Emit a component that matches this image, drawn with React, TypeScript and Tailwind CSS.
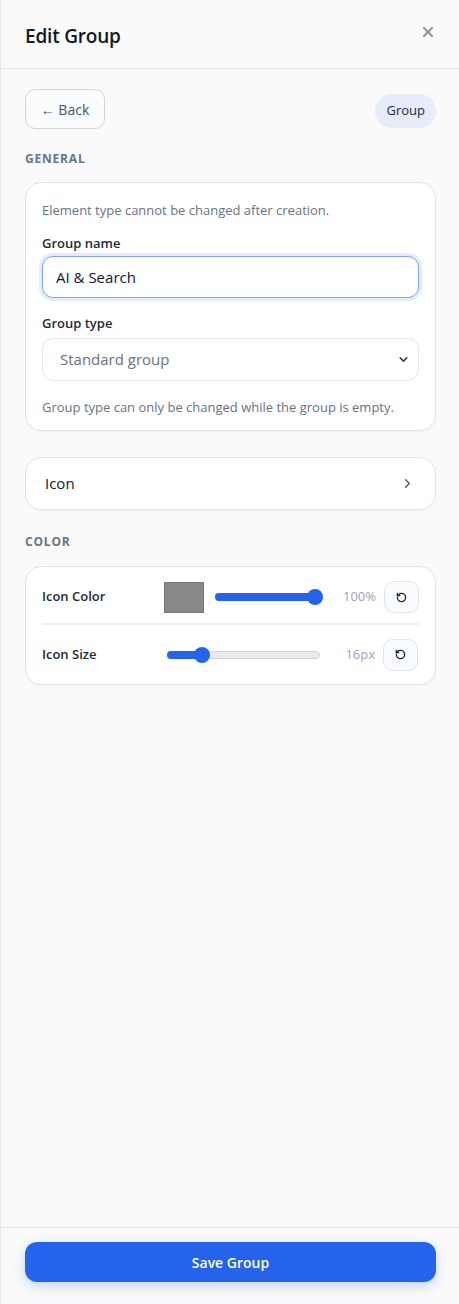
import { ChevronRight, ChevronDown, X, RotateCcw } from 'lucide-react';

function ResetButton() {
  return (
    <button className="flex h-8 w-[35px] shrink-0 items-center justify-center rounded-[10px] border border-[#dfe3ea] bg-[#fafbfc] text-[#1f2937]">
      <RotateCcw size={11} strokeWidth={3} />
    </button>
  );
}

function Slider({ pct, width }: { pct: number; width: number }) {
  return (
    <div className="relative h-4" style={{ width }}>
      <div className="absolute left-0 right-0 top-1/2 h-[8px] -translate-y-1/2 rounded-full border border-[#cfd3da] bg-[#e9ebee]" />
      <div
        className="absolute left-0 top-1/2 h-[8px] -translate-y-1/2 rounded-full bg-[#2563eb]"
        style={{ width: `${pct}%` }}
      />
      <div
        className="absolute top-1/2 h-4 w-4 -translate-x-1/2 -translate-y-1/2 rounded-full bg-[#2563eb]"
        style={{ left: `${pct}%` }}
      />
    </div>
  );
}

export default function App() {
  return (
    <div
      className="flex h-[1304px] w-[459px] flex-col border-l border-[#e5e7eb] bg-[#fafafa] text-[#111827]"
      style={{ fontFamily: '"Open Sans", "Noto Sans", sans-serif' }}
    >
      {/* header */}
      <div className="flex h-[69px] shrink-0 items-center justify-between border-b border-[#e5e7eb] pl-6 pr-[23px]">
        <h1 className="mt-1 text-[19px] font-semibold tracking-[-0.2px] text-[#111827]">Edit Group</h1>
        <X size={16} strokeWidth={3} className="mb-1 text-[#8a93a3]" />
      </div>

      {/* body */}
      <div className="flex flex-1 flex-col pl-6 pr-[23px] pt-5">
        <div className="flex items-center justify-between">
          <button className="h-10 w-20 rounded-[10px] border border-[#d1d5db] bg-[#fafbfd] text-[14px] font-medium text-[#475569]">
            ← Back
          </button>
          <span className="mt-1 flex h-[34px] items-center rounded-full bg-[#e7ecfb] px-[11px] text-[13px] font-medium text-[#1e293b]">
            Group
          </span>
        </div>

        <div className="mt-[22px] text-[12px] font-bold leading-4 tracking-[0.8px] text-[#64748b]">GENERAL</div>

        <div className="mt-[15px] rounded-2xl border border-[#e2e4e8] bg-white px-4 pb-[14px] pt-[18px] shadow-[0_1px_2px_rgba(0,0,0,0.04)]">
          <p className="text-[13px] leading-[18px] text-[#6b7280]">Element type cannot be changed after creation.</p>
          <label className="mt-[15px] block text-[13px] font-semibold leading-[18px] text-[#1f2937]">Group name</label>
          <div className="mt-[4px] flex h-[42px] items-center rounded-[11px] border-[1.5px] border-[#7fa3ee] bg-white px-[13px] text-[15px] text-[#111827] shadow-[0_0_0_3px_rgba(37,99,235,0.12)]">
            AI &amp; Search
          </div>
          <label className="mt-[16px] block text-[13px] font-semibold leading-[18px] text-[#1f2937]">Group type</label>
          <div className="mt-[6px] flex h-[43px] items-center justify-between rounded-[11px] border border-[#e3e5e9] bg-white pl-[17px] pr-[8px] text-[15px] text-[#6b7280]">
            <span>Standard group</span>
            <ChevronDown size={13} strokeWidth={3} className="text-[#374151]" />
          </div>
          <p className="mt-[17px] text-[13px] leading-[18px] text-[#6b7280]">Group type can only be changed while the group is empty.</p>
        </div>

        <div className="mt-[26px] flex h-[53px] items-center justify-between rounded-2xl border border-[#e2e4e8] bg-white pl-[19px] pr-[20px] shadow-[0_1px_2px_rgba(0,0,0,0.04)]">
          <span className="text-[15px] font-medium text-[#111827]">Icon</span>
          <ChevronRight size={15} strokeWidth={2} className="text-[#4b5563]" />
        </div>

        <div className="mt-[24px] text-[12px] font-bold leading-4 tracking-[0.8px] text-[#64748b]">COLOR</div>

        <div className="mt-[16px] rounded-2xl border border-[#e2e4e8] bg-white px-4 shadow-[0_1px_2px_rgba(0,0,0,0.04)]">
          <div className="flex h-[58px] items-center border-b-2 border-[#eeeff2] pt-1">
            <span className="w-[122px] text-[13px] font-semibold text-[#1f2937]">Icon Color</span>
            <div className="h-[31px] w-10 border border-[#777] bg-[#888888]" />
            <div className="ml-[11px]">
              <Slider pct={94} width={106} />
            </div>
            <span className="w-[55px] text-right text-[13px] text-[#9ca3af]">100%</span>
            <div className="ml-2">
              <ResetButton />
            </div>
          </div>
          <div className="flex h-[59px] items-center">
            <span className="w-[125px] text-[13px] font-semibold text-[#1f2937]">Icon Size</span>
            <Slider pct={23} width={153} />
            <span className="w-[55px] text-right text-[13px] text-[#9ca3af]">16px</span>
            <div className="ml-2">
              <ResetButton />
            </div>
          </div>
        </div>
      </div>

      {/* footer */}
      <div className="shrink-0 border-t border-[#e0e0e0] pb-[22px] pl-6 pr-[23px] pt-[14px]">
        <button className="h-10 w-full rounded-xl bg-[#2563eb] text-[14px] font-semibold text-white shadow-[0_4px_12px_rgba(37,99,235,0.25)]">
          Save Group
        </button>
      </div>
    </div>
  );
}
